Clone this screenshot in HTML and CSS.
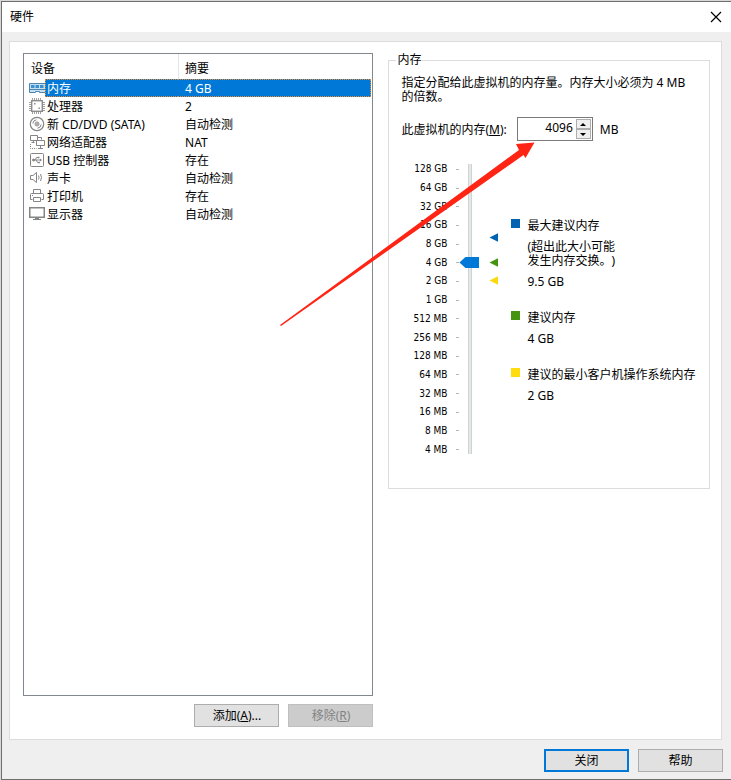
FILE: index.html
```html
<!DOCTYPE html>
<html lang="zh-CN">
<head>
<meta charset="utf-8">
<title>硬件</title>
<link rel="stylesheet" href="styles.css">
</head>
<body>
<div class="window">
  <header class="titlebar">
    <h1 class="title">硬件</h1>
    <button class="close-x" type="button" aria-label="关闭窗口">
      <svg width="12" height="12" viewBox="0 0 12 12"><path d="M1 1L11 11M11 1L1 11" stroke="#000" stroke-width="1.2" fill="none"/></svg>
    </button>
  </header>

  <main class="panel">
    <section class="devices">
      <div class="list">
        <table class="device-table">
          <colgroup><col class="col-icon"><col class="col-name"><col></colgroup>
          <thead>
            <tr><th colspan="2">设备</th><th class="summary-head">摘要</th></tr>
          </thead>
          <tbody>
            <tr class="selected">
              <td class="icon"><svg viewBox="0 0 16 16"><path d="M.5 3.500h16v9h-6v-1h-4v1h-6z" fill="#c4e2f4" stroke="#4f84ad"/><path d="M2 5h3.500v3H2zM6.500 5H10v3H6.500zM11 5h3.500v3H11z" fill="#3b8fd0"/><path d="M0 9.500h16" stroke="#4f84ad"/></svg></td>
              <td class="name">内存</td><td class="summary">4 GB</td>
            </tr>
            <tr>
              <td class="icon"><svg viewBox="0 0 16 16"><path d="M3.500 0v16M5.500 0v16M7.500 0v16M9.500 0v16M11.500 0v16M0 4.500h16M0 6.500h16M0 8.500h16M0 10.500h16M0 12.500h16" stroke="#a0a0a0"/><rect x="2.700" y="2.700" width="10.600" height="10.600" fill="#fff" stroke="#8c8c8c" stroke-width="1.400"/><path d="M5 5h1.500v1.500H5zM9.500 9.500H11V11H9.500z" fill="#8c8c8c"/></svg></td>
              <td class="name">处理器</td><td class="summary">2</td>
            </tr>
            <tr>
              <td class="icon"><svg viewBox="0 0 16 16" fill="none" stroke="#858585"><circle cx="8" cy="8" r="6.700" stroke-width="1.200"/><circle cx="8" cy="8" r="2"/><path d="M3.800 7.500a4.200 4.200 0 0 1 3.700-3.700M12.200 8.500a4.200 4.200 0 0 1-3.700 3.700"/><circle cx="8" cy="8" r=".5" fill="#858585"/></svg></td>
              <td class="name">新 CD/DVD (SATA)</td><td class="summary">自动检测</td>
            </tr>
            <tr>
              <td class="icon"><svg viewBox="0 0 16 16" fill="none" stroke="#858585"><path d="M1.500 1.500h7v5h-7zM4.500 6.500v2M2.500 8.500h3M8.500 3.500h4v2"/><path d="M7.500 6.500h8v5h-8zM11.500 11.500v3M9 14.500h5"/><path d="M1.500 10v4.500h6" stroke-dasharray="1 1"/></svg></td>
              <td class="name">网络适配器</td><td class="summary">NAT</td>
            </tr>
            <tr>
              <td class="icon"><svg viewBox="0 0 16 16" fill="none" stroke="#858585"><rect x="1.500" y="1.500" width="13" height="13" rx="1"/><path d="M4 8h8M6 8l1.500-2.500H9M7 8l1.500 2.500H10"/><circle cx="4.500" cy="8" r="1" fill="#858585"/><path d="M11 6.500L13 8l-2 1.500z" fill="#858585" stroke="none"/><path d="M9 4.700h1.500v1.500H9zM9.500 9.700H11v1.500H9.500z" fill="#858585" stroke="none"/></svg></td>
              <td class="name">USB 控制器</td><td class="summary">存在</td>
            </tr>
            <tr>
              <td class="icon"><svg viewBox="0 0 16 16" fill="none" stroke="#858585"><path d="M1.500 5.500h2.500l3.500-3v10l-3.500-3H1.500z"/><path d="M9.500 5.500q1 2 0 4M11.500 4q2 3.500 0 7"/></svg></td>
              <td class="name">声卡</td><td class="summary">自动检测</td>
            </tr>
            <tr>
              <td class="icon"><svg viewBox="0 0 16 16" fill="none" stroke="#858585"><path d="M4.500 5.500v-4h7v4M3.500 11.500h-2v-5q0-1 1-1h11q1 0 1 1v5h-2"/><path d="M4.500 9.500h7v4h-7zM3 7.500h1"/></svg></td>
              <td class="name">打印机</td><td class="summary">存在</td>
            </tr>
            <tr>
              <td class="icon"><svg viewBox="0 0 16 16"><rect x=".75" y="1.750" width="14.500" height="9.500" fill="#fff" stroke="#858585" stroke-width="1.500"/><path d="M6 11.500h4v1.500h2v1H4v-1h2z" fill="#858585"/></svg></td>
              <td class="name">显示器</td><td class="summary">自动检测</td>
            </tr>
          </tbody>
        </table>
      </div>
      <div class="list-actions">
        <button class="btn" type="button">添加(<u>A</u>)...</button>
        <button class="btn" type="button" disabled>移除(<u>R</u>)</button>
      </div>
    </section>

    <fieldset class="memory">
      <legend>内存</legend>
      <p class="intro">指定分配给此虚拟机的内存量。内存大小必须为 4 MB 的倍数。</p>
      <div class="amount">
        <label for="mem">此虚拟机的内存(<u>M</u>):</label>
        <div class="spinner">
          <input id="mem" type="text" inputmode="numeric" value="4096">
          <div class="steps">
            <button type="button" aria-label="增加"><svg width="6" height="3" viewBox="0 0 6 3"><path d="M0 3L3 0L6 3z"/></svg></button>
            <button type="button" aria-label="减少"><svg width="6" height="3" viewBox="0 0 6 3"><path d="M0 0L3 3L6 0z"/></svg></button>
          </div>
        </div>
        <span>MB</span>
      </div>

      <div class="sizing">
        <ol class="scale">
          <li>128 GB</li><li>64 GB</li><li>32 GB</li><li>16 GB</li>
          <li>8 GB</li><li>4 GB</li><li>2 GB</li><li>1 GB</li>
          <li>512 MB</li><li>256 MB</li><li>128 MB</li><li>64 MB</li>
          <li>32 MB</li><li>16 MB</li><li>8 MB</li><li>4 MB</li>
        </ol>
        <input class="slider" type="range" min="0" max="15" value="10" aria-label="内存大小">
        <div class="markers">
          <i class="marker max"></i>
          <i class="marker rec"></i>
          <i class="marker min"></i>
        </div>
        <dl class="legend">
          <div class="entry max">
            <dt>最大建议内存</dt>
            <dd>(超出此大小可能<br>发生内存交换。)</dd>
            <dd>9.5 GB</dd>
          </div>
          <div class="entry rec">
            <dt>建议内存</dt>
            <dd>4 GB</dd>
          </div>
          <div class="entry min">
            <dt>建议的最小客户机操作系统内存</dt>
            <dd>2 GB</dd>
          </div>
        </dl>
      </div>
    </fieldset>
  </main>

  <footer class="footer">
    <button class="btn primary" type="button">关闭</button>
    <button class="btn" type="button">帮助</button>
  </footer>

  <svg class="arrow" width="256" height="185" viewBox="0 0 256 185" aria-hidden="true"><path d="M0 183L239 8L236 2L254.500 .5L245.500 16L243.500 13L1 184z" fill="#ff2414"/></svg>
</div>
</body>
</html>
```
FILE: styles.css
```css
* { box-sizing: border-box; }

body {
  margin: 0;
  background: #d8d8d8;
  color: #000;
  font: 12px/14px "Noto Sans", "Noto Sans CJK SC", sans-serif;
  text-spacing-trim: space-all;
}

button, input { font: inherit; color: inherit; }

.window {
  position: relative;
  display: flex;
  flex-direction: column;
  min-height: calc(100vh - 1px);
  margin: 1px 0 0 1px;
  border: solid #6e6e6e;
  border-width: 1px 0 1px 1px;
  background: #efefef;
}

.titlebar {
  display: flex;
  align-items: center;
  justify-content: space-between;
  height: 30px;
  padding: 0 9px 0 8px;
  background: #fff;
}

.title { margin: 0; font-size: 12px; font-weight: 400; }

.close-x {
  display: flex;
  padding: 0;
  border: 0;
  background: none;
}

.panel {
  display: grid;
  flex: 1;
  grid-template-columns: minmax(0, 351fr) minmax(0, 322fr);
  align-items: start;
  gap: 15px;
  margin: 9px 9px 0 7px;
  padding: 11px 11px 12px 13px;
  border: 1px solid #dcdcdc;
  background: #fff;
}

.devices {
  display: flex;
  flex-direction: column;
  align-self: stretch;
  gap: 8px;
}

.list {
  flex: 1;
  padding-right: 1px;
  border: 1px solid #828790;
}

.device-table {
  width: 100%;
  border-spacing: 0;
  table-layout: fixed;
}

.col-icon { width: 21px; }
.col-name { width: 133px; }

.device-table th {
  height: 25px;
  padding: 4px 0 0 7px;
  font-weight: 400;
  text-align: left;
}

.device-table .summary-head { padding-left: 6px; border-left: 1px solid #e5e5e5; }

.device-table td { height: 18px; padding: 2px 0 0; white-space: nowrap; }
.device-table td.icon { padding: 0 0 0 5px; }
.device-table td.name { padding-left: 2px; }
.device-table td.summary { padding-left: 7px; }

.icon svg { display: block; width: 16px; height: 16px; }

.device-table .selected .name,
.device-table .selected .summary {
  padding-top: 1px;
  border: dotted #f08a28;
  border-width: 1px 0;
  background: #0078d7;
  color: #fff;
}

.device-table .selected .name { border-left-width: 1px; padding-left: 1px; }
.device-table .selected .summary { border-right-width: 1px; }

.list-actions { display: flex; justify-content: flex-end; gap: 9px; }

.btn {
  width: 85px;
  height: 23px;
  padding: 0;
  border: 1px solid #adadad;
  background: #e1e1e1;
}

.btn:disabled { border-color: #bfbfbf; background: #ccc; color: #838383; }
.btn.primary { border: 2px solid #0078d7; }

.memory {
  min-width: 0;
  min-height: 436px;
  margin: 0;
  padding: 9px 12px 0;
  border: 1px solid #dcdcdc;
}

.memory > legend { margin-left: -5px; padding: 0 1px; }

.intro { margin: 0; }

.amount {
  display: flex;
  align-items: center;
  gap: 7px;
  margin-top: 13px;
}

.amount label { padding: 2px 3px 0 0; }
.amount span { padding-top: 2px; }

.spinner {
  display: flex;
  width: 76px;
  height: 24px;
  border: 1px solid #7a7a7a;
  background: #fff;
}

.spinner input {
  flex: 1;
  min-width: 0;
  padding: 0 2px 2px 0;
  border: 0;
  background: none;
  text-align: right;
}

.steps { display: flex; flex-direction: column; width: 17px; padding: 1px; }

.steps button {
  display: flex;
  flex: 1;
  align-items: center;
  justify-content: center;
  padding: 0;
  border: 1px solid #adadad;
  background: #f0f0f0;
}

.sizing { display: flex; align-items: flex-start; margin-top: 19px; }

.scale {
  display: grid;
  grid-auto-rows: 1fr;
  align-items: center;
  width: 58px;
  height: 299px;
  margin: 0;
  padding: 0;
  font: 10px/14px "DejaVu Sans Condensed", "DejaVu Sans", sans-serif;
  list-style: none;
}

.scale li {
  display: flex;
  align-items: center;
  justify-content: flex-end;
  gap: 9px;
  white-space: nowrap;
}

.scale li::after { content: ""; width: 3px; height: 1px; background: #b5b5b5; }

.slider {
  appearance: none;
  width: 20px;
  height: 290px;
  margin: 4px 0 0;
  background: linear-gradient(90deg, #d0d3d3 1px, #e4e8e8 1px 3px, #d0d3d3 3px) 9px 0 / 4px 100% no-repeat;
  writing-mode: vertical-lr;
  direction: rtl;
}

.slider::-webkit-slider-thumb {
  appearance: none;
  width: 20px;
  height: 11px;
  background: #0078d7;
  clip-path: polygon(0 50%, 6px 0, 100% 0, 100% 100%, 6px 100%);
}

.markers { position: relative; width: 32px; height: 299px; }

.marker {
  position: absolute;
  left: 10px;
  width: 9px;
  height: 9px;
  clip-path: polygon(0 50%, 100% 0, 100% 100%);
}

.marker.max { top: 73px; background: #0063b1; }
.marker.rec { top: 98px; background: #449410; }
.marker.min { top: 116px; background: #ffd90f; }

.legend {
  display: flex;
  flex: 1;
  flex-direction: column;
  gap: 22px;
  min-width: 0;
  margin: 59px 0 0;
  white-space: nowrap;
}

.entry { display: grid; grid-template-columns: 9px 1fr; column-gap: 7px; row-gap: 7px; }
.entry::before { content: ""; width: 9px; height: 9px; }
.entry dd { grid-column: 2; margin: 0; }
.entry.max::before { background: #0063b1; }
.entry.rec::before { background: #449410; }
.entry.min::before { background: #ffdc0f; }

.footer {
  display: flex;
  justify-content: flex-end;
  gap: 9px;
  padding: 9px 8px 7px;
}

.arrow {
  position: absolute;
  left: 278px;
  top: 140px;
  pointer-events: none;
}
```
